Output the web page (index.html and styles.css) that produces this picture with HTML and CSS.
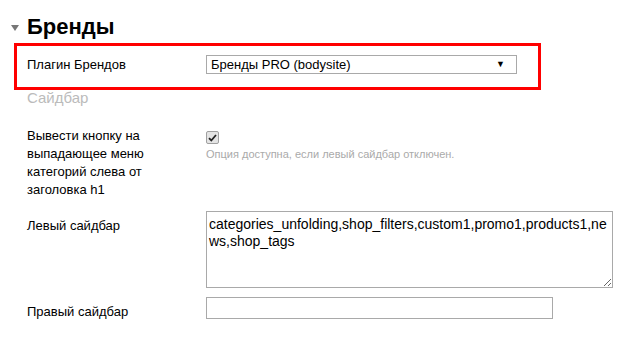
FILE: index.html
```html
<!DOCTYPE html>
<html lang="ru">
<head>
    <meta charset="UTF-8">
    <title>Бренды</title>
    <link rel="stylesheet" href="styles.css">
</head>
<body>
    <h2 class="section-title">
        <svg class="toggle" width="8" height="6" viewBox="0 0 8 6"><polygon points="0,0 8,0 4,6" fill="#777"/></svg>
        Бренды
    </h2>
    <div class="highlight">
        <div class="row row-plugin">
            <label for="brand_plugin">Плагин Брендов</label>
            <div class="select-wrap">
                <select id="brand_plugin" name="brand_plugin">
                    <option>Бренды PRO (bodysite)</option>
                </select>
                <span class="arrow">▼</span>
            </div>
        </div>
    </div>
    <div class="subtitle">Сайдбар</div>
    <div class="row row-check">
        <label for="h1_button">Вывести кнопку на выпадающее меню категорий слева от заголовка h1</label>
        <div class="control">
            <span class="checkbox" id="h1_button">
                <svg width="9" height="8" viewBox="0 0 9 8"><path d="M1 4.2 L3.3 6.5 L8 1" fill="none" stroke="#222" stroke-width="1.8"/></svg>
            </span>
            <div class="hint">Опция доступна, если левый сайдбар отключен.</div>
        </div>
    </div>
    <div class="row row-left">
        <label for="left_sidebar">Левый сайдбар</label>
        <textarea id="left_sidebar" name="left_sidebar">categories_unfolding,shop_filters,custom1,promo1,products1,news,shop_tags</textarea>
    </div>
    <div class="row row-right">
        <label for="right_sidebar">Правый сайдбар</label>
        <input type="text" id="right_sidebar" name="right_sidebar">
    </div>
</body>
</html>
```

FILE: styles.css
```css
body {
    font-family: "Liberation Sans", Arial, sans-serif;
    font-size: 13px;
    color: #000;
    margin: 0;
    padding: 14px 0 0 0;
}
.section-title {
    display: flex;
    align-items: center;
    margin: 0 0 3px 0;
    padding-left: 11px;
    font-size: 22px;
    line-height: 26px;
    font-weight: bold;
}
.toggle {
    margin-right: 8px;
    margin-top: 2px;
}
.highlight {
    margin-left: 14px;
    width: 521px;
    border: 3px solid #f00;
    padding: 9px 0 13px 0;
}
.row {
    display: grid;
    grid-template-columns: 179px 1fr;
    padding-left: 27px;
    line-height: 18px;
}
.row-plugin {
    padding-left: 10px;
    align-items: center;
}
.select-wrap {
    position: relative;
    width: 311px;
}
.select-wrap select {
    appearance: none;
    -webkit-appearance: none;
    width: 311px;
    height: 19px;
    margin: 0;
    padding: 0 0 0 4px;
    border: 1px solid #a9a9a9;
    border-radius: 0;
    background: #fff;
    font-family: inherit;
    font-size: 13px;
    color: #000;
}
.arrow {
    position: absolute;
    right: 12px;
    top: 1px;
    font-size: 9px;
    line-height: 17px;
    pointer-events: none;
}
.subtitle {
    padding-left: 27px;
    font-size: 15px;
    line-height: 16px;
    color: #bbb;
}
.row-check {
    margin-top: 21px;
}
.row-check label {
    max-width: 150px;
}
.checkbox {
    display: flex;
    align-items: center;
    justify-content: center;
    width: 11px;
    height: 11px;
    margin: 4px 0 3px 0;
    border: 1px solid #a0a0a0;
    border-radius: 2px;
    background: #e4e4e4;
}
.hint {
    font-size: 11px;
    line-height: 14px;
    color: #aaa;
}
.row-left {
    margin-top: 12px;
}
.row-left label {
    padding-top: 6px;
}
textarea {
    display: block;
    width: 407px;
    height: 77px;
    box-sizing: border-box;
    margin: 0;
    padding: 4px 2px 2px 2px;
    border: 1px solid #a9a9a9;
    font-family: inherit;
    font-size: 14px;
    line-height: 17px;
    color: #000;
    word-break: break-all;
    resize: both;
}
.row-right {
    margin-top: 9px;
}
.row-right label {
    padding-top: 6px;
}
.row-right input {
    display: block;
    width: 347px;
    height: 22px;
    box-sizing: border-box;
    margin: 0;
    border: 1px solid #a9a9a9;
}
```
